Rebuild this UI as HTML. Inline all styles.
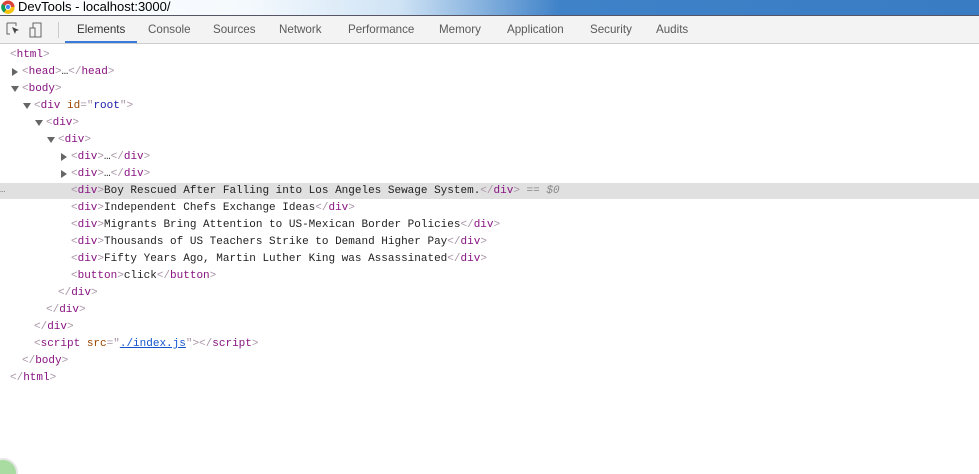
<!DOCTYPE html>
<html style="height:474px;overflow:hidden"><head><style>
body{margin:0;width:979px;height:474px;overflow:hidden;background:#fff;position:relative;font-family:"Liberation Sans",sans-serif}
#title{position:absolute;left:0;top:0;width:979px;height:15px;background:linear-gradient(90deg,#fff 0,#f4f9fd 250px,#cfe3f5 400px,#3f82c8 560px,#3a7cc4 979px);border-bottom:1px solid #556}
#title span{position:absolute;left:18px;top:0;font-size:13px;color:#000;line-height:14px}
#tb{position:absolute;left:0;top:16px;width:979px;height:27px;background:#f3f3f3;border-bottom:1px solid #ccc}
.tab{position:absolute;top:7px;font-size:11.6px;color:#5a5a5a}
.c{position:absolute;font-family:"Liberation Mono",monospace;font-size:11px;line-height:17px;white-space:pre;color:#222}
.t{color:#881280}.b{color:#a894a6}.an{color:#994500}.av{color:#1a1aa6}
.arr{position:absolute;width:0;height:0}
.r{border-left:6px solid #666;border-top:4px solid transparent;border-bottom:4px solid transparent}
.d{border-top:6px solid #666;border-left:4px solid transparent;border-right:4px solid transparent}
</style></head><body>
<div id="title"><svg style="position:absolute;left:1px;top:0" width="14" height="14"><circle cx="7" cy="7" r="6.5" fill="#db4437"/><path d="M7 7 L13.5 7 A6.5 6.5 0 0 1 3 12.5Z" fill="#f4c20d"/><path d="M7 7 L3 12.5 A6.5 6.5 0 0 1 1 4Z" fill="#0f9d58"/><circle cx="7" cy="7" r="3" fill="#fff"/><circle cx="7" cy="7" r="2.2" fill="#4285f4"/></svg><span>DevTools - localhost:3000/</span></div>
<div id="tb">
<svg style="position:absolute;left:6px;top:6px" width="44" height="16"><path d="M1 1h9v3M1 1v11h3" fill="none" stroke="#666"/><path d="M6 5l7 3-3 1-1 3z" fill="#444"/><rect x="27" y="1" width="8" height="14" fill="none" stroke="#666"/><rect x="24" y="6" width="5" height="9" fill="#f3f3f3" stroke="#666"/></svg>
<div style="position:absolute;left:58px;top:6px;width:1px;height:16px;background:#ccc"></div>
<span class="tab" style="left:77px;color:#333">Elements</span>
<span class="tab" style="left:148px">Console</span>
<span class="tab" style="left:213px">Sources</span>
<span class="tab" style="left:279px">Network</span>
<span class="tab" style="left:348px">Performance</span>
<span class="tab" style="left:439px">Memory</span>
<span class="tab" style="left:507px">Application</span>
<span class="tab" style="left:590px">Security</span>
<span class="tab" style="left:656px">Audits</span>
<div style="position:absolute;left:65px;top:25px;width:72px;height:2px;background:#3879d9"></div>
</div>
<div style="position:absolute;left:0;top:183px;width:979px;height:16px;background:#e0e0e0"></div>
<span class="c" style="left:0;top:182px;color:#777;font-size:9px">…</span>
<div class="arr r" style="left:12px;top:68px"></div>
<div class="arr d" style="left:11px;top:86px"></div>
<div class="arr d" style="left:23px;top:103px"></div>
<div class="arr d" style="left:35px;top:120px"></div>
<div class="arr d" style="left:47px;top:137px"></div>
<div class="arr r" style="left:61px;top:153px"></div>
<div class="arr r" style="left:61px;top:170px"></div>
<div class="c" style="left:10px;top:47px"><span class="b">&lt;</span><span class="t">html</span><span class="b">&gt;</span></div>
<div class="c" style="left:22px;top:64px"><span class="b">&lt;</span><span class="t">head</span><span class="b">&gt;</span>…<span class="b">&lt;/</span><span class="t">head</span><span class="b">&gt;</span></div>
<div class="c" style="left:22px;top:81px"><span class="b">&lt;</span><span class="t">body</span><span class="b">&gt;</span></div>
<div class="c" style="left:34px;top:98px"><span class="b">&lt;</span><span class="t">div</span> <span class="an">id</span><span class="b">="</span><span class="av">root</span><span class="b">"&gt;</span></div>
<div class="c" style="left:46px;top:115px"><span class="b">&lt;</span><span class="t">div</span><span class="b">&gt;</span></div>
<div class="c" style="left:58px;top:132px"><span class="b">&lt;</span><span class="t">div</span><span class="b">&gt;</span></div>
<div class="c" style="left:71px;top:149px"><span class="b">&lt;</span><span class="t">div</span><span class="b">&gt;</span>…<span class="b">&lt;/</span><span class="t">div</span><span class="b">&gt;</span></div>
<div class="c" style="left:71px;top:166px"><span class="b">&lt;</span><span class="t">div</span><span class="b">&gt;</span>…<span class="b">&lt;/</span><span class="t">div</span><span class="b">&gt;</span></div>
<div class="c" style="left:71px;top:183px"><span class="b">&lt;</span><span class="t">div</span><span class="b">&gt;</span>Boy Rescued After Falling into Los Angeles Sewage System.<span class="b">&lt;/</span><span class="t">div</span><span class="b">&gt;</span> <span style="color:#888">== <i>$0</i></span></div>
<div class="c" style="left:71px;top:200px"><span class="b">&lt;</span><span class="t">div</span><span class="b">&gt;</span>Independent Chefs Exchange Ideas<span class="b">&lt;/</span><span class="t">div</span><span class="b">&gt;</span></div>
<div class="c" style="left:71px;top:217px"><span class="b">&lt;</span><span class="t">div</span><span class="b">&gt;</span>Migrants Bring Attention to US-Mexican Border Policies<span class="b">&lt;/</span><span class="t">div</span><span class="b">&gt;</span></div>
<div class="c" style="left:71px;top:234px"><span class="b">&lt;</span><span class="t">div</span><span class="b">&gt;</span>Thousands of US Teachers Strike to Demand Higher Pay<span class="b">&lt;/</span><span class="t">div</span><span class="b">&gt;</span></div>
<div class="c" style="left:71px;top:251px"><span class="b">&lt;</span><span class="t">div</span><span class="b">&gt;</span>Fifty Years Ago, Martin Luther King was Assassinated<span class="b">&lt;/</span><span class="t">div</span><span class="b">&gt;</span></div>
<div class="c" style="left:71px;top:268px"><span class="b">&lt;</span><span class="t">button</span><span class="b">&gt;</span>click<span class="b">&lt;/</span><span class="t">button</span><span class="b">&gt;</span></div>
<div class="c" style="left:58px;top:285px"><span class="b">&lt;/</span><span class="t">div</span><span class="b">&gt;</span></div>
<div class="c" style="left:46px;top:302px"><span class="b">&lt;/</span><span class="t">div</span><span class="b">&gt;</span></div>
<div class="c" style="left:34px;top:319px"><span class="b">&lt;/</span><span class="t">div</span><span class="b">&gt;</span></div>
<div class="c" style="left:34px;top:336px"><span class="b">&lt;</span><span class="t">script</span> <span class="an">src</span><span class="b">="</span><span style="color:#1155cc;text-decoration:underline">./index.js</span><span class="b">"&gt;&lt;/</span><span class="t">script</span><span class="b">&gt;</span></div>
<div class="c" style="left:22px;top:353px"><span class="b">&lt;/</span><span class="t">body</span><span class="b">&gt;</span></div>
<div class="c" style="left:10px;top:370px"><span class="b">&lt;/</span><span class="t">html</span><span class="b">&gt;</span></div>
<div style="position:absolute;left:-12px;top:458px;width:26px;height:26px;border-radius:50%;background:#a8dca0;border:2px solid #e6e6e6"></div>
</body></html>
